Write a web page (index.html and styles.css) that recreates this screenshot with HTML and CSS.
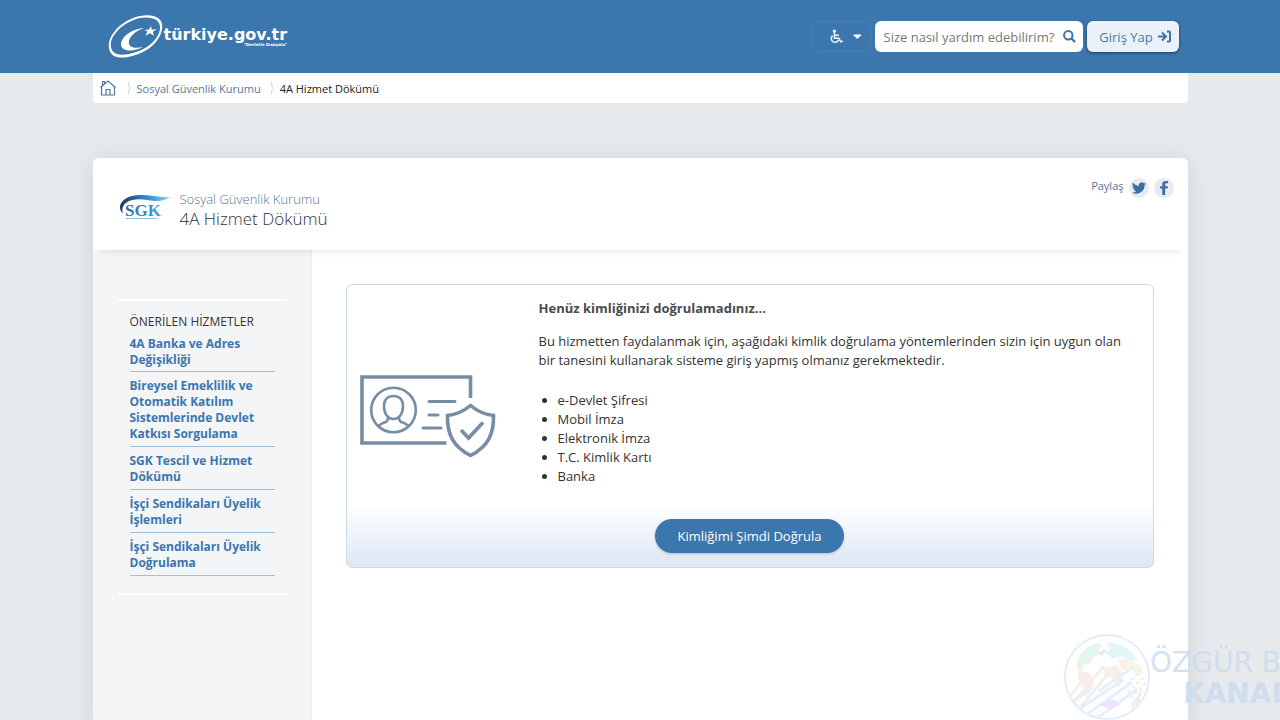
FILE: index.html
```html
<!DOCTYPE html>
<html lang="tr">
<head>
<meta charset="utf-8">
<meta name="viewport" content="width=device-width, initial-scale=1">
<title>4A Hizmet Dökümü</title>
<link rel="stylesheet" href="styles.css">
</head>
<body>
<header class="topbar">
  <div class="container topbar-inner">
    <a class="brand" href="#" aria-label="türkiye.gov.tr">
      <svg class="brand-mark" viewBox="0 0 56 46" aria-hidden="true">
        <path fill="#fff" fill-rule="evenodd" d="M1 34C-1 22 13 6 32 2C47-1 56 5 54 15C52 29 37 40 20 43C9 45 2 42 1 34ZM3 33C4 40 11 42 21 40C37 37 50 27 52 15C53 6 45 2 32 4C15 8 1 22 3 33Z"/>
        <path fill="#fff" d="M36 14C23 15 13 23 13 31C14 38 26 38 35 33C25 35 20 33 21 27C22 22 28 17 36 14Z"/>
        <path fill="#fff" d="M43 12l.8 3.800 5-.8-4 2.800 1.200 4-4-2.500-4.500 2.500 2-4.300-3-1.500 4.500-.5z"/>
      </svg>
      <span class="brand-words"><span class="brand-name">türkiye.gov.tr</span><span class="brand-tag">"Devletin Kısayolu"</span></span>
    </a>
    <div class="tools">
      <button class="access" type="button" aria-label="Erişilebilirlik">
        <svg class="icon" viewBox="0 0 16 16" fill="none" stroke="#eef4fa" stroke-width="1.700" aria-hidden="true"><circle cx="6" cy="2" r="1.800" fill="#eef4fa" stroke="none"/><path d="M6 3v7h5l2 4 2.500-1M6 6.500h5M4 7a4.200 4.200 0 1 0 6.500 5"/></svg>
        <svg class="caret" viewBox="0 0 10 6" aria-hidden="true"><path fill="#fff" d="M1 0h8q1 0 .5 1L6 4.500Q5 5.500 4 4.500L.5 1Q0 0 1 0z"/></svg>
      </button>
      <form class="search" role="search">
        <input class="search-input" type="text" aria-label="Arama" placeholder="Size nasıl yardım edebilirim?">
        <button class="search-button" type="button" aria-label="Ara"><svg class="search-icon" viewBox="0 0 13 13" fill="none" stroke="#3c76ad" stroke-width="2" aria-hidden="true"><circle cx="5.300" cy="5.300" r="4.200"/><path d="M8.500 8.500l3.500 3.500" stroke-width="2.400"/></svg></button>
      </form>
      <button class="login" type="button">Giriş Yap
        <svg class="search-icon" viewBox="0 0 13 13" fill="none" stroke="#3c76ad" stroke-width="2" aria-hidden="true"><path d="M0 6.500h7M4 2.500l4 4-4 4M9 1.500h2q1 0 1 1v8q0 1-1 1H9"/></svg>
      </button>
    </div>
  </div>
</header>

<main class="container">
  <nav class="crumbs" aria-label="Gezinti">
    <a class="home" href="#" aria-label="Ana sayfa"><svg class="home-icon" viewBox="0 0 16 16" fill="none" stroke="#54779b" stroke-width="1.200" aria-hidden="true"><path d="M.5 7.500L8 1l7.500 6.500M1.500 7V15h13V7M6 15V9.500h4V15M2.500 5.500V1.500h2V4"/></svg></a>
    <svg class="sep" viewBox="0 0 5 14" fill="none" stroke="#cdd5dc" aria-hidden="true"><path d="M1 0q3 7 0 14"/></svg>
    <a class="crumb" href="#">Sosyal Güvenlik Kurumu</a>
    <svg class="sep" viewBox="0 0 5 14" fill="none" stroke="#cdd5dc" aria-hidden="true"><path d="M1 0q3 7 0 14"/></svg>
    <span class="crumb-current">4A Hizmet Dökümü</span>
  </nav>

  <div class="sheet">
    <div class="sheet-head">
      <svg class="sgk" viewBox="0 0 52 26" role="img" aria-label="SGK">
        <defs><linearGradient id="swoosh"><stop offset="0" stop-color="#17376a"/><stop offset=".35" stop-color="#286da8"/><stop offset=".65" stop-color="#39a0dc"/><stop offset="1" stop-color="#9ad2f2"/></linearGradient><linearGradient id="letters"><stop offset="0" stop-color="#2a6aa2"/><stop offset="1" stop-color="#48a5d8"/></linearGradient></defs>
        <path fill="url(#swoosh)" d="M4 20C-2 14 1 5 13 2C25-1 39 4 51 3C46 7 38 8 28 6C14 3 0 8 4 20Z"/>
        <text x="6" y="22" class="sgk-text" fill="url(#letters)">SGK</text>
        <path stroke="#76b4dc" stroke-dasharray="2 .5" d="M7 24.500h31"/>
      </svg>
      <h1 class="title"><a class="agency" href="#">Sosyal Güvenlik Kurumu</a><span class="service">4A Hizmet Dökümü</span></h1>
      <div class="share">
        <span class="share-label">Paylaş</span>
        <a class="social" href="#" aria-label="Twitter"><svg class="social-icon" viewBox="0 0 24 24" fill="#3c70a5" aria-hidden="true"><path d="M24 4.600a10 10 0 0 1-2.800.8 5 5 0 0 0 2.100-2.700 10 10 0 0 1-3.100 1.200 4.900 4.900 0 0 0-8.400 4.500A14 14 0 0 1 1.700 3.100a4.900 4.900 0 0 0 1.500 6.600 5 5 0 0 1-2.200-.6 4.900 4.900 0 0 0 3.900 4.900 5 5 0 0 1-2.200.1 4.900 4.900 0 0 0 4.600 3.400A9.900 9.900 0 0 1 0 19.500a14 14 0 0 0 21.500-12.400A10 10 0 0 0 24 4.600z"/></svg></a>
        <a class="social" href="#" aria-label="Facebook"><svg class="social-icon" viewBox="0 0 24 24" fill="#3c70a5" aria-hidden="true"><path d="M9 24V13H5V9h4V6c0-4 2-6 6-6h4v4h-3q-2 0-2 2v3h5l-1 4h-4v11z"/></svg></a>
      </div>
    </div>
    <div class="sheet-body">
      <aside class="side">
        <section class="suggest">
          <h2 class="suggest-title">ÖNERİLEN HİZMETLER</h2>
          <ul class="suggest-list">
            <li class="suggest-item"><a class="suggest-link" href="#">4A Banka ve Adres Değişikliği</a></li>
            <li class="suggest-item"><a class="suggest-link" href="#">Bireysel Emeklilik ve Otomatik Katılım Sistemlerinde Devlet Katkısı Sorgulama</a></li>
            <li class="suggest-item"><a class="suggest-link" href="#">SGK Tescil ve Hizmet Dökümü</a></li>
            <li class="suggest-item"><a class="suggest-link" href="#">İşçi Sendikaları Üyelik İşlemleri</a></li>
            <li class="suggest-item"><a class="suggest-link" href="#">İşçi Sendikaları Üyelik Doğrulama</a></li>
          </ul>
        </section>
      </aside>
      <div class="content">
        <section class="auth">
          <div class="auth-main">
            <svg class="auth-art" viewBox="0 0 136 84" fill="none" stroke="#768da5" stroke-width="3.600" aria-hidden="true">
              <path d="M110.500 23V2H2v66h84.500"/>
              <g stroke-width="2.600"><circle cx="33.500" cy="35" r="22.300"/><path d="M33.500 21c-6 0-9.500 4-9.500 10 0 8 4 13 9.500 13S43 39 43 31c0-6-3.500-10-9.500-10zM28 42c0 4-1 5-5 6l-5 3M39 42c0 4 1 5 5 6l5 3"/></g>
              <path d="M69 26.500h26M69 40h9M63 53h18" stroke-width="3" stroke-linecap="round"/>
              <path d="M110.500 30.500C104 36 96 39.500 87.500 40.500 87 59 93 71.500 110.500 80.500 128 71.500 134 59 133.500 40.500 125 39.500 117 36 110.500 30.500z"/>
              <path d="M101 55l7.500 8L123 47.500"/>
            </svg>
            <div class="auth-text">
              <h2 class="auth-title">Henüz kimliğinizi doğrulamadınız...</h2>
              <p class="auth-copy">Bu hizmetten faydalanmak için, aşağıdaki kimlik doğrulama yöntemlerinden sizin için uygun olan bir tanesini kullanarak sisteme giriş yapmış olmanız gerekmektedir.</p>
              <ul class="methods"><li>e-Devlet Şifresi</li><li>Mobil İmza</li><li>Elektronik İmza</li><li>T.C. Kimlik Kartı</li><li>Banka</li></ul>
            </div>
          </div>
          <div class="auth-foot"><button class="verify" type="button">Kimliğimi Şimdi Doğrula</button></div>
        </section>
      </div>
    </div>
  </div>
</main>

<div class="watermark">
  <svg class="globe" viewBox="0 0 86 86" aria-hidden="true">
    <defs><clipPath id="disc"><circle cx="43" cy="43" r="41"/></clipPath></defs>
    <circle cx="43" cy="43" r="42" fill="#fff" stroke="#dbe8f7" stroke-width="1.500"/>
    <g clip-path="url(#disc)" stroke-linecap="round" fill="none">
      <path fill="#e9f6e6" d="M13 27C17 17 26 10 35 9l4 3-5 4 1 5-6 2-2 6-7 2-2 6-5-3z"/>
      <path fill="#e2f7f5" d="M17 21c5-6 12-11 19-12l-4 5 2 5-7 2-4 6-5-1zM43 9c13-1 24 6 30 16l-7 3-9-6-8 3-7-6 4-4z"/>
      <path fill="#fbf4e4" d="M54 25l12 1 10 6 3 8-4 2-9-7-9 1z"/>
      <path fill="#eee6f9" d="M34 18l6-3 3 2-6 5z"/>
      <path fill="#fbedea" d="M14 36l9 2 7 7-1 7-7 12-3-12-5-7zM40 34l12-3 7 8-3 14-5-1-3-9-8-2z"/>
      <path stroke="#f0f1eb" stroke-width="3" d="M6 62l18-22M10 68l29-35M18 71l27-32"/>
      <path stroke="#e6effb" stroke-width="3" d="M5 69l20-12M12 77l47-31M22 81l45-32M35 83l37-27M36 56l32-22"/>
      <path stroke="#e6effb" stroke-width="3" stroke-dasharray="0 6" d="M64 49l14-14M65 57l15-14M68 63l13-13"/>
      <path fill="#ece4fa" d="M34 70l6-1 4-3 8 0 4 5-9 5-6-3z"/>
      <path fill="#f9ece3" d="M67 70l11-15-2 13-8 7z"/>
    </g>
  </svg>
  <div class="wm-text"><span class="wm-top">ÖZGÜR B</span><span class="wm-bottom">KANAL</span></div>
</div>
</body>
</html>
```
FILE: styles.css
```css
* { box-sizing: border-box; }
body {
  margin: 0;
  min-height: 100vh;
  display: flex;
  flex-direction: column;
  position: relative;
  overflow-x: hidden;
  background: #e6eaed;
  color: #333;
  font-family: "Open Sans", "Noto Sans", sans-serif;
  font-size: 13px;
}
a { color: #3c76ad; text-decoration: none; }
button { font: inherit; cursor: pointer; }
.container { width: 100%; max-width: 1095px; margin: 0 auto; }
.topbar { background: #3b76ad; }
.topbar-inner { display: flex; justify-content: space-between; align-items: center; height: 73px; padding: 0 9px 0 15px; }
.brand { display: flex; align-items: center; color: #fff; }
.brand-mark { width: 56px; height: 46px; }
.brand-words { display: flex; flex-direction: column; font-family: "DejaVu Sans", sans-serif; font-weight: 700; line-height: 1; }
.brand-name { font-size: 16px; }
.brand-tag { font-size: 4px; text-align: right; }
.tools { display: flex; gap: 4px; }
.tools > * { height: 31px; border-radius: 6px; }
.access { display: flex; align-items: center; gap: 10px; width: 59px; padding: 0 8px 0 16px; border: 1px solid #477fb5; background: none; }
.icon { width: 15px; height: 15px; }
.caret { width: 9px; height: 6px; }
.search { display: flex; align-items: center; width: 208px; padding: 0 7px 0 9px; background: #fff; }
.search-input { flex: 1; min-width: 0; padding: 0; border: 0; outline: 0; background: none; font: inherit; color: #333; }
.search-input::placeholder { color: #777; opacity: 1; }
.search-button { display: flex; padding: 0; border: 0; background: none; }
.search-icon { width: 13px; height: 13px; }
.login { display: flex; align-items: center; justify-content: center; gap: 5px; width: 92px; padding: 0 0 0 5px; border: 0; background: #ebf1f8; color: #4a7bad; box-shadow: 0 1px 3px rgba(0, 0, 0, .5); white-space: nowrap; }
main { flex: 1; display: flex; flex-direction: column; }
.crumbs { display: flex; align-items: center; height: 30px; padding: 0 7px; background: #fff; border-radius: 0 0 4px 4px; font-size: 11px; }
.home { display: flex; margin-right: 11px; }
.home-icon { width: 16px; height: 16px; }
.sep { width: 5px; height: 14px; margin-right: 5px; }
.crumb { margin-right: 9px; color: #54779b; }
.crumb-current { color: #222; }
.sheet { flex: 1; display: flex; flex-direction: column; margin-top: 55px; border-radius: 6px 6px 0 0; background: #fff; box-shadow: 0 4px 24px rgba(60, 80, 100, .14); }
.sheet-head { position: relative; display: flex; align-items: flex-start; height: 92px; padding: 20px 14px 0 26px; border-radius: 6px 6px 0 0; background: #fff; box-shadow: 0 8px 8px -8px rgba(0, 0, 0, .14); }
.sgk { width: 52px; height: 26px; margin: 16px 9px 0 0; }
.sgk-text { font: 700 17px "Liberation Serif", serif; }
.title { display: flex; flex-direction: column; margin: 12px auto 0 0; font-weight: 300; }
.agency { color: #54779b; font-size: 13px; line-height: 18px; }
.service { font-size: 17px; line-height: 22px; }
.share { display: flex; gap: 5px; }
.share-label { color: #54779b; font-size: 11px; line-height: 16px; }
.social { display: flex; align-items: center; justify-content: center; width: 20px; height: 20px; border-radius: 50%; background: #e8ecf0; }
.social-icon { width: 14px; height: 14px; }
.sheet-body { flex: 1; display: grid; grid-template-columns: 219px 1fr; }
.side { padding: 49px 23px 0 25px; background: #f3f5f7; border-right: 2px solid #eff1f4; }
.suggest { padding: 12px 12px 17px; border-top: 2px solid #fff; border-bottom: 2px solid #fff; }
.suggest-title { margin: 0; font-size: 12px; font-weight: 400; line-height: 18px; white-space: nowrap; }
.suggest-list { margin: 0; padding: 0; list-style: none; }
.suggest-item { padding: 5px 0 3px; border-bottom: 1px solid #a4bfd8; }
.suggest-item + .suggest-item { padding: 6px 0 4px; }
.suggest-link { display: block; font-size: 12px; font-weight: 700; line-height: 16px; }
.content { padding: 34px; }
.auth { border: 1px solid #cbdce3; border-radius: 6px; background: linear-gradient(to top, #dbe7f3, #fff 62px); }
.auth-main { display: grid; grid-template-columns: 136px 1fr; align-items: center; column-gap: 43px; padding: 14px 14px 0 13px; }
.auth-art { width: 136px; height: 84px; margin-top: 48px; }
.auth-title { margin: 0 0 14px; color: #484b50; font-size: 13px; line-height: 19px; }
.auth-copy { margin: 0; line-height: 19px; }
.methods { margin: 21px 0 0; padding: 0 0 0 19px; line-height: 19px; }
.auth-foot { display: flex; justify-content: center; padding: 33px 0 14px; }
.verify { height: 34px; padding: 0 22px; border: 0; border-radius: 17px; background: #3b76ad; color: #fff; box-shadow: 0 1px 3px rgba(0, 0, 0, .2); }
.watermark { position: absolute; right: 0; bottom: 0; display: flex; width: 216px; height: 86px; overflow: hidden; color: #c9dcef; pointer-events: none; }
.globe { flex: none; width: 86px; height: 86px; }
.wm-text { display: flex; flex-direction: column; padding-top: 13px; font-family: "DejaVu Sans", sans-serif; font-size: 28px; line-height: 31px; white-space: nowrap; opacity: .8; }
.wm-bottom { padding-left: 33px; font-weight: 700; }
```
